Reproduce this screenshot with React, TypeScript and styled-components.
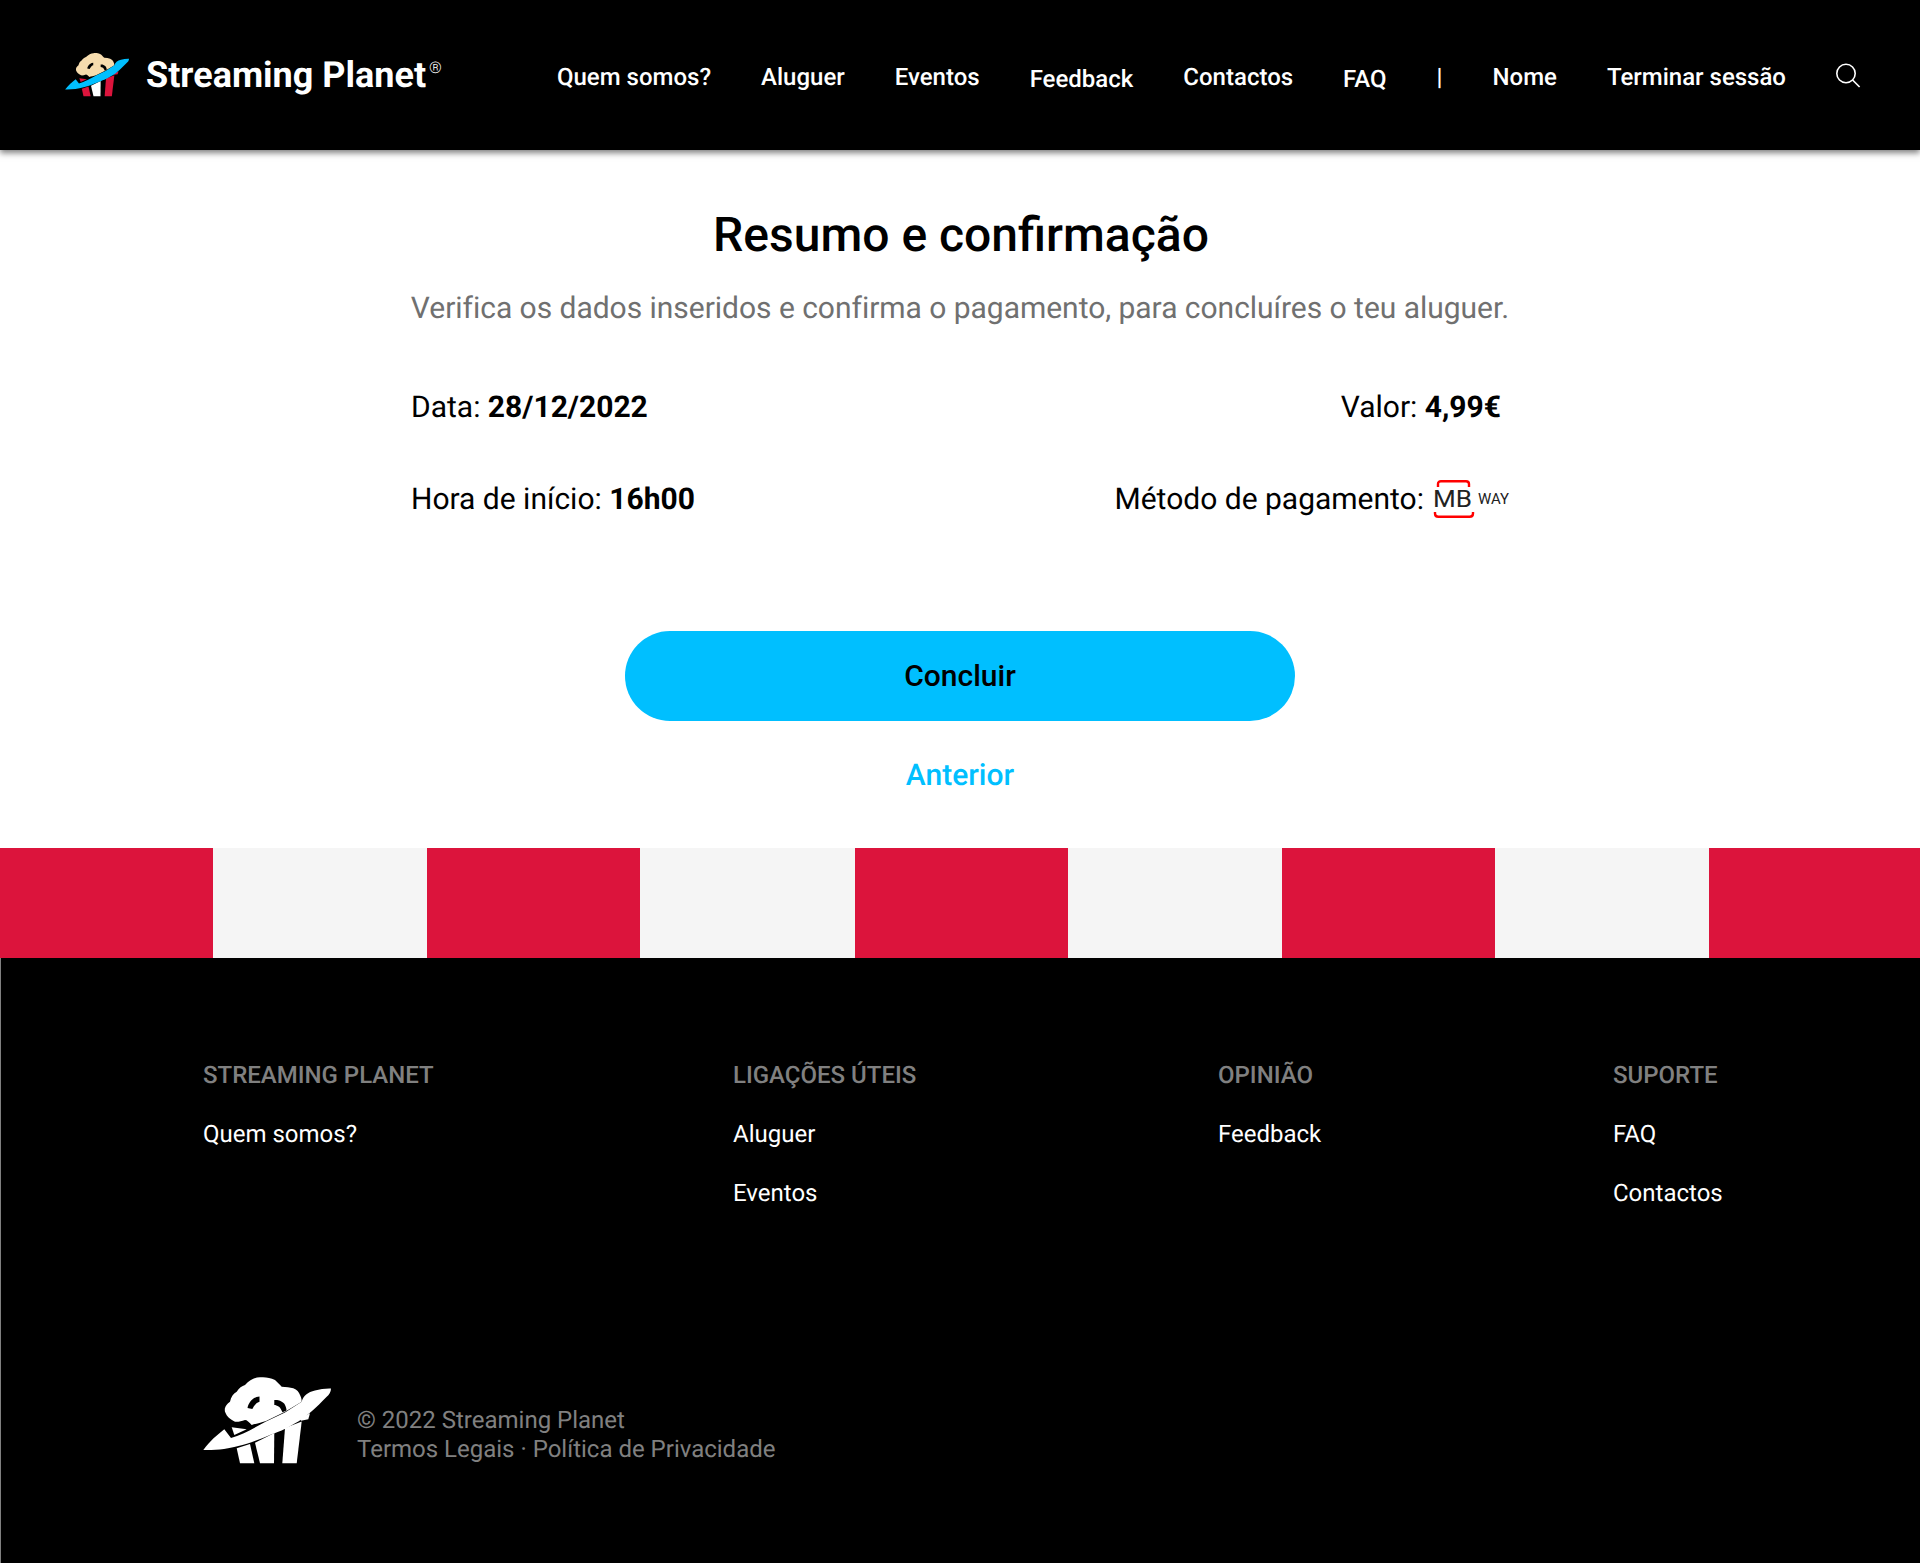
import React from 'react';
import styled, { createGlobalStyle } from 'styled-components';

const GlobalStyle = createGlobalStyle`
    html, body {
        margin: 0;
        padding: 0;
        background: #fff;
        font-family: Roboto, "Liberation Sans", sans-serif;
        text-rendering: geometricPrecision;
    }
    * {
        box-sizing: border-box;
    }
`

const Page = styled.div`
    width: 100%;
    height: 1563px;
    display: flex;
    flex-direction: column;
`

const Header = styled.header`
    position: relative;
    z-index: 2;
    height: 150px;
    padding: 0 59px 0 65px;
    background: #000;
    box-shadow: 0 3px 6px rgba(0, 0, 0, 0.5);
    display: flex;
    align-items: center;
    justify-content: space-between;
`

const Brand = styled.div`
    display: flex;
    align-items: center;
    gap: 15px;
    color: #fff;
`

const BrandName = styled.span`
    font-size: 36px;
    font-weight: 700;
    display: flex;
`

const Registered = styled.sup`
    font-size: 16px;
    font-weight: 300;
    line-height: 1;
    margin: 6px 0 0 3px;
`

const Nav = styled.nav`
    display: flex;
    align-items: center;
    gap: 50px;
    padding-top: 3px;
`

const NavLink = styled.a<{ $low?: boolean }>`
    color: #fff;
    font-size: 24px;
    font-weight: 500;
    margin-top: ${p => (p.$low ? '4px' : '0')};
`

const SearchButton = styled.span`
    display: flex;
    margin-left: -1px;
    margin-top: -1px;
`

const Main = styled.main`
    width: 1096px;
    height: 698px;
    margin: 0 auto;
    padding-top: 51px;
    display: flex;
    flex-direction: column;
    align-items: center;
`

const Title = styled.h1`
    margin: 0;
    padding-left: 2px;
    font-size: 48px;
    line-height: 68px;
    font-weight: 500;
    color: #000;
`

const Subtitle = styled.p`
    margin: 22px 0 0;
    font-size: 30px;
    line-height: 36px;
    letter-spacing: -0.03px;
    color: #707070;
    white-space: nowrap;
`

const InfoGrid = styled.div`
    width: calc(100% + 2px);
    margin-top: 62px;
    display: flex;
    flex-direction: column;
    gap: 56px;
`

const InfoRow = styled.div`
    display: flex;
    align-items: center;
    justify-content: space-between;
    height: 36px;
`

const InfoItem = styled.div<{ $inset?: number }>`
    display: flex;
    align-items: center;
    font-size: 30px;
    color: #000;
    white-space: pre;
    margin-right: ${p => p.$inset ?? 0}px;

    b {
        font-weight: 700;
    }
`

const MbWay = styled.span`
    display: inline-flex;
    align-items: center;
    margin-left: 9px;
    margin-right: -2px;
`

const ConcludeButton = styled.button`
    width: 670px;
    height: 90px;
    margin-top: 114px;
    padding: 0 0 2px;
    border: none;
    border-radius: 45px;
    background: #00bfff;
    color: #000;
    font-family: inherit;
    font-size: 30px;
    font-weight: 500;
`

const BackLink = styled.a`
    margin-top: 37px;
    color: #00bfff;
    font-size: 30px;
    font-weight: 500;
    line-height: 36px;
`

const Awning = styled.div`
    height: 110px;
    display: grid;
    grid-template-columns: 213px 214px 213px 215px 213px 214px 213px 214px 1fr;
`

const AwningStripe = styled.div<{ $red: boolean }>`
    background: ${p => (p.$red ? '#dc143c' : '#f5f5f5')};
`

const Footer = styled.footer`
    flex: 1;
    background: #000;
    border-left: 1px solid #808080;
    padding: 103px 0 0 202px;
`

const FooterColumns = styled.div`
    display: grid;
    grid-template-columns: 530px 485px 395px auto;
    height: 314px;
`

const FooterColumn = styled.div`
    display: flex;
    flex-direction: column;
    gap: 31px;
`

const FooterHeading = styled.h4`
    margin: 0;
    font-size: 24px;
    line-height: 28px;
    font-weight: 500;
    color: #808080;
    text-transform: uppercase;
`

const FooterLink = styled.a`
    font-size: 24px;
    line-height: 28px;
    color: #fff;
`

const Legal = styled.div`
    display: flex;
    align-items: center;
    gap: 22px;
`

const LegalText = styled.div`
    padding-top: 27px;
    font-size: 24px;
    line-height: 29px;
    color: #808080;
`

type LogoProps = {
    width: number;
    cloud: string;
    ring: string;
    bars: [string, string, string];
}

const Logo = ({ width, cloud, ring, bars }: LogoProps) => (
    <svg width={width} viewBox="3 0 132 92" style={{ display: 'block', flexShrink: 0 }}>
        <path
            fill={cloud}
            d="M25 36.7C24 32 27 29 30 26.7C31 22 33 19 36.7 16.7C39 13 42 11 45 10C50 5 55 2.3 60 2.3C65 1.8 70 2.5 75 5C78 8 80 10 81.7 11.7C86 12 90 12.5 93.3 13.3C97 15 99 17 100 20C101 22 101.7 24 101.7 26.7L85 36.7L66 46C60 48 55 49 51.7 50C49 47 47 45 45 45C41 46.5 38 47 35 46.7C30 44 27 42 25 36.7Z"
        />
        <path fill="#000" d="M47.5 33C48 30 49 28.5 50 27C52 24 55 22 59.5 21.5L59.5 26.7C57 27.5 55.5 29 55 30C53.5 31.5 53 33 52.3 34Z" />
        <path fill="#000" d="M74.3 25C77 24.8 79 25.2 80 25.8C82.5 27 84.5 28.5 85 30C86 32 86.5 34 86.5 35.5L82.5 37.3C81.5 35 80.5 33 79 31.7C77 30.5 75.5 30 74.3 30Z" />
        <path fill={bars[0]} d="M31.7 52.3L46.7 54.3L34.3 60Z" />
        <path fill={bars[0]} d="M36.7 73.3L50 69L54.3 88.3H40Z" />
        <path fill={bars[1]} d="M55 67.7L74.3 58L74 88.3H60Z" />
        <path fill={bars[2]} d="M85 53L101.7 46.5L96.7 88.3H82.3Z" />
        <path fill={bars[2]} d="M100 43.3L110 38.3L108.3 44.3L101 45.7Z" />
        <path
            fill={ring}
            d="M3.3 75C10 66 17 60 24.3 54.3L31 63C42 60 54 53 66 46.5L85 37.5L101.7 26.7C103 21 108 17 115 15.5C120 14 126 13.3 131 13.5C131 17 129 20 126.7 21.7C121 27 117 32 112 36C107 40 103 44 98.3 46.5C92 50 87 53 81.7 55.5C77 57 73 59 70 60C60 64 48 69 38.3 71C30 73.5 15 75.5 3.3 75Z"
        />
    </svg>
)

const SearchIcon = () => (
    <svg width="26" height="26" viewBox="0 0 26 26" fill="none" stroke="#fff" strokeWidth="1.6">
        <circle cx="11" cy="10.5" r="9.2" />
        <path d="M17.6 17L24.6 24" />
    </svg>
)

const MbWayLogo = () => (
    <svg width="78" height="40" viewBox="0 0 78 40" style={{ display: 'block' }}>
        <path d="M5 8V5C5 3.2 6.2 2.2 8 2.2H33C34.8 2.2 36 3.2 36 5V8" fill="none" stroke="#f00" strokeWidth="2.4" />
        <path d="M2 33V34.5C2 36.6 3.2 37.8 5.4 37.8H36.6C38.8 37.8 40 36.6 40 34.5V33" fill="none" stroke="#f00" strokeWidth="2.4" />
        <text x="0" y="28" fontFamily="Roboto" fontSize="24" fontWeight="400" textLength="39" lengthAdjust="spacingAndGlyphs" fill="#222">MB</text>
        <text x="45" y="25" fontFamily="Roboto" fontSize="15.5" fontWeight="400" textLength="31" lengthAdjust="spacingAndGlyphs" fill="#222">WAY</text>
    </svg>
)

const navLinks = [
    { label: 'Quem somos?' },
    { label: 'Aluguer' },
    { label: 'Eventos' },
    { label: 'Feedback', low: true },
    { label: 'Contactos' },
    { label: 'FAQ', low: true },
    { label: '|' },
    { label: 'Nome' },
    { label: 'Terminar sessão' },
]

const footerColumns = [
    { title: 'Streaming Planet', links: ['Quem somos?'] },
    { title: 'Ligações úteis', links: ['Aluguer', 'Eventos'] },
    { title: 'Opinião', links: ['Feedback'] },
    { title: 'Suporte', links: ['FAQ', 'Contactos'] },
]

const App = () => {
    return (
        <Page>
            <GlobalStyle />
            <Header>
                <Brand>
                    <Logo width={66} cloud="#f6dcae" ring="#00bfff" bars={['#dc143c', '#fff', '#dc143c']} />
                    <BrandName>Streaming Planet<Registered>®</Registered></BrandName>
                </Brand>
                <Nav>
                    {navLinks.map(link => (
                        <NavLink key={link.label} $low={link.low}>{link.label}</NavLink>
                    ))}
                    <SearchButton><SearchIcon /></SearchButton>
                </Nav>
            </Header>
            <Main>
                <Title>Resumo e confirmação</Title>
                <Subtitle>Verifica os dados inseridos e confirma o pagamento, para concluíres o teu aluguer.</Subtitle>
                <InfoGrid>
                    <InfoRow>
                        <InfoItem>Data: <b>28/12/2022</b></InfoItem>
                        <InfoItem $inset={8}>Valor: <b>4,99€</b></InfoItem>
                    </InfoRow>
                    <InfoRow>
                        <InfoItem>Hora de início: <b>16h00</b></InfoItem>
                        <InfoItem>Método de pagamento:<MbWay><MbWayLogo /></MbWay></InfoItem>
                    </InfoRow>
                </InfoGrid>
                <ConcludeButton>Concluir</ConcludeButton>
                <BackLink>Anterior</BackLink>
            </Main>
            <Awning>
                {Array.from({ length: 9 }, (_, i) => (
                    <AwningStripe key={i} $red={i % 2 === 0} />
                ))}
            </Awning>
            <Footer>
                <FooterColumns>
                    {footerColumns.map(col => (
                        <FooterColumn key={col.title}>
                            <FooterHeading>{col.title}</FooterHeading>
                            {col.links.map(link => (
                                <FooterLink key={link}>{link}</FooterLink>
                            ))}
                        </FooterColumn>
                    ))}
                </FooterColumns>
                <Legal>
                    <Logo width={132} cloud="#fff" ring="#fff" bars={['#fff', '#fff', '#fff']} />
                    <LegalText>
                        © 2022 Streaming Planet<br />
                        Termos Legais · Política de Privacidade
                    </LegalText>
                </Legal>
            </Footer>
        </Page>
    );
};

export default App;
